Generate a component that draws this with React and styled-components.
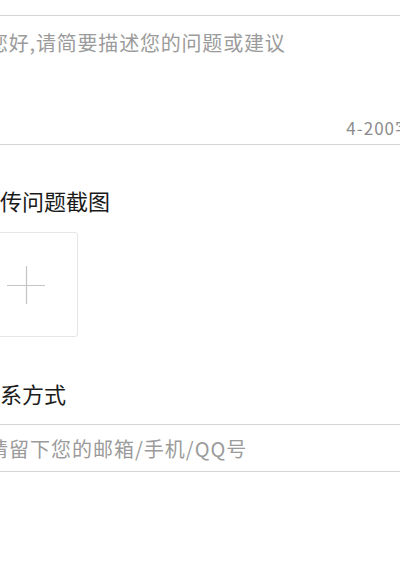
import React from 'react';
import styled, { createGlobalStyle } from 'styled-components';

const GlobalStyle = createGlobalStyle`
  html, body {
    margin: 0;
    padding: 0;
    background: #fff;
    overflow: hidden;
  }
  body {
    font-family: "Noto Sans CJK SC", "Noto Sans", sans-serif;
  }
`;

const Page = styled.div`
  margin-left: -37px;
  width: 462px;
  padding-top: 15px;
  display: flex;
  flex-direction: column;
`;

const TextBox = styled.div`
  height: 130px;
  box-sizing: border-box;
  border-top: 1px solid #d4d4d4;
  border-bottom: 1px solid #d4d4d4;
  display: flex;
  flex-direction: column;
  padding: 12px 12px 6px 25px;
`;

const Area = styled.textarea`
  flex: 1;
  border: none;
  outline: none;
  resize: none;
  padding: 0;
  margin: 0;
  font-family: inherit;
  font-size: 20px;
  line-height: 30px;
  letter-spacing: 0.8px;
  color: #333;
  background: transparent;

  &::placeholder {
    color: #9b9b9b;
  }
`;

const Counter = styled.div`
  align-self: flex-end;
  font-size: 17px;
  line-height: 20px;
  color: #8c8c8c;
  letter-spacing: 1px;
`;

const Title = styled.h2`
  margin: ${({ $top }) => $top}px 0 0;
  padding-left: 15px;
  font-size: 22px;
  line-height: 30px;
  font-weight: 400;
  color: #1a1a1a;
`;

const Upload = styled.button`
  margin: 17px 0 0 10px;
  width: 105px;
  height: 105px;
  box-sizing: border-box;
  border: 1px solid #e6e6e6;
  border-radius: 3px;
  background: #fff;
  display: flex;
  align-items: center;
  justify-content: center;
  padding: 0;
`;

const Field = styled.input`
  margin-top: 16px;
  height: 48px;
  box-sizing: border-box;
  border: none;
  border-top: 1px solid #d4d4d4;
  border-bottom: 1px solid #d4d4d4;
  outline: none;
  padding: 0 15px 0 25px;
  font-family: inherit;
  font-size: 20px;
  letter-spacing: 1px;
  color: #333;
  background: transparent;

  &::placeholder {
    color: #9b9b9b;
  }
`;

const Plus = () => (
  <svg width="38" height="38" viewBox="0 0 38 38">
    <path d="M0 19.5H38M19.5 0V38" stroke="#c4c4c4" strokeWidth="1.2" fill="none" />
  </svg>
);

export default function App() {
  return (
    <>
      <GlobalStyle />
      <Page>
        <TextBox>
          <Area placeholder="您好,请简要描述您的问题或建议" />
          <Counter>4-200字</Counter>
        </TextBox>
        <Title $top={40}>上传问题截图</Title>
        <Upload>
          <Plus />
        </Upload>
        <Title $top={41}>联系方式</Title>
        <Field placeholder="请留下您的邮箱/手机/QQ号" />
      </Page>
    </>
  );
}
